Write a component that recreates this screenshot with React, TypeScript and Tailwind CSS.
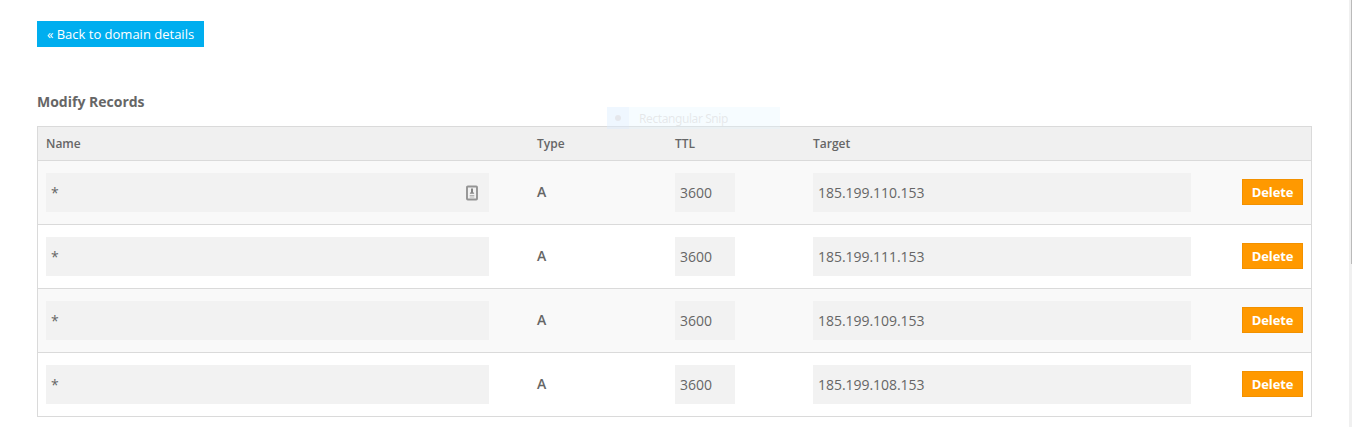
interface DnsRecord {
  name: string;
  type: string;
  ttl: string;
  target: string;
  autofill?: boolean;
}

const records: DnsRecord[] = [
  { name: '*', type: 'A', ttl: '3600', target: '185.199.110.153', autofill: true },
  { name: '*', type: 'A', ttl: '3600', target: '185.199.111.153' },
  { name: '*', type: 'A', ttl: '3600', target: '185.199.109.153' },
  { name: '*', type: 'A', ttl: '3600', target: '185.199.108.153' },
];

function AutofillIcon() {
  return (
    <svg width="12" height="16" viewBox="0 0 12 16" fill="none" className="shrink-0">
      <rect x="1" y="1.5" width="10" height="13" rx="0.8" fill="#f2f2f2" stroke="#949494" strokeWidth="1.9" />
      <path d="M6 3.5v4" stroke="#777" strokeWidth="1.8" />
      <path d="M3.8 8.8c0-1.2 1-1.8 2.2-1.8s2.2.6 2.2 1.8z" fill="#888" />
      <path d="M3.7 10.5h4.6M3.7 12h4.6" stroke="#b5b5b5" strokeWidth="1.2" />
    </svg>
  );
}

function RecordRow({ record, shaded }: { record: DnsRecord; shaded: boolean }) {
  return (
    <div
      className={`grid h-16 grid-cols-[491px_138px_138px_378px_1fr] items-center border-b border-[#dadada] px-2 ${
        shaded ? 'bg-[#f9f9f9]' : 'bg-white'
      }`}
    >
      <div className="flex h-[39px] w-[443px] items-center justify-between bg-[#f2f2f2] pr-[11px] pl-[5px] text-sm">
        <span>{record.name}</span>
        {record.autofill && <AutofillIcon />}
      </div>
      <div className="pb-0.5 text-sm font-semibold">{record.type}</div>
      <div className="flex h-[39px] w-[60px] items-center bg-[#f2f2f2] pl-[5px] text-sm">{record.ttl}</div>
      <div className="flex h-[39px] items-center bg-[#f2f2f2] pl-[5px] text-sm tracking-[-0.04px]">
        {record.target}
      </div>
      <button className="-mt-px flex h-[26px] w-[61px] items-center justify-center justify-self-end border border-[#f29100] bg-[#ff9900] pt-0.5 text-[13px] font-bold tracking-[-0.1px] text-white">
        Delete
      </button>
    </div>
  );
}

export default function App() {
  return (
    <div className="flex h-[427px] w-full overflow-hidden bg-white font-['Open_Sans',sans-serif] text-[#666]">
      <main className="relative flex-1 pt-[21px] pl-[37px]">
        <button className="flex h-[26px] w-[167px] items-center justify-center bg-[#00aeef] pt-0.5 text-[13px] text-white">
          « Back to domain details
        </button>
        <h2 className="mt-[45px] h-5 text-sm leading-5 font-bold">Modify Records</h2>
        <section className="mt-3.5 w-[1275px] border border-b-0 border-[#dadada]">
          <div className="grid h-[34px] grid-cols-[491px_138px_138px_378px_1fr] items-center border-b border-[#dadada] bg-[#f0f0f0] px-2 text-xs font-semibold">
            <span>Name</span>
            <span>Type</span>
            <span>TTL</span>
            <span>Target</span>
          </div>
          {records.map((record, i) => (
            <RecordRow key={record.target} record={record} shaded={i % 2 === 0} />
          ))}
        </section>
        <div className="pointer-events-none absolute top-[107px] left-[607px] flex h-[22px] w-[173px] items-center bg-[#e0f4ff]/30 text-xs text-[#b4aaaa]/25">
          <span className="flex h-full w-[22px] items-center justify-center bg-[#d8e8ff]/20">
            <span className="size-1.5 rounded-full bg-[#d8d0d0]/40" />
          </span>
          <span className="ml-2.5 pt-px font-['Noto_Sans',sans-serif] tracking-[-0.42px]">Rectangular Snip</span>
        </div>
      </main>
      <div className="flex h-full w-[3px] justify-end bg-[#f0f0f0]">
        <div className="h-[264px] w-px bg-[#bababa]" />
      </div>
    </div>
  );
}
